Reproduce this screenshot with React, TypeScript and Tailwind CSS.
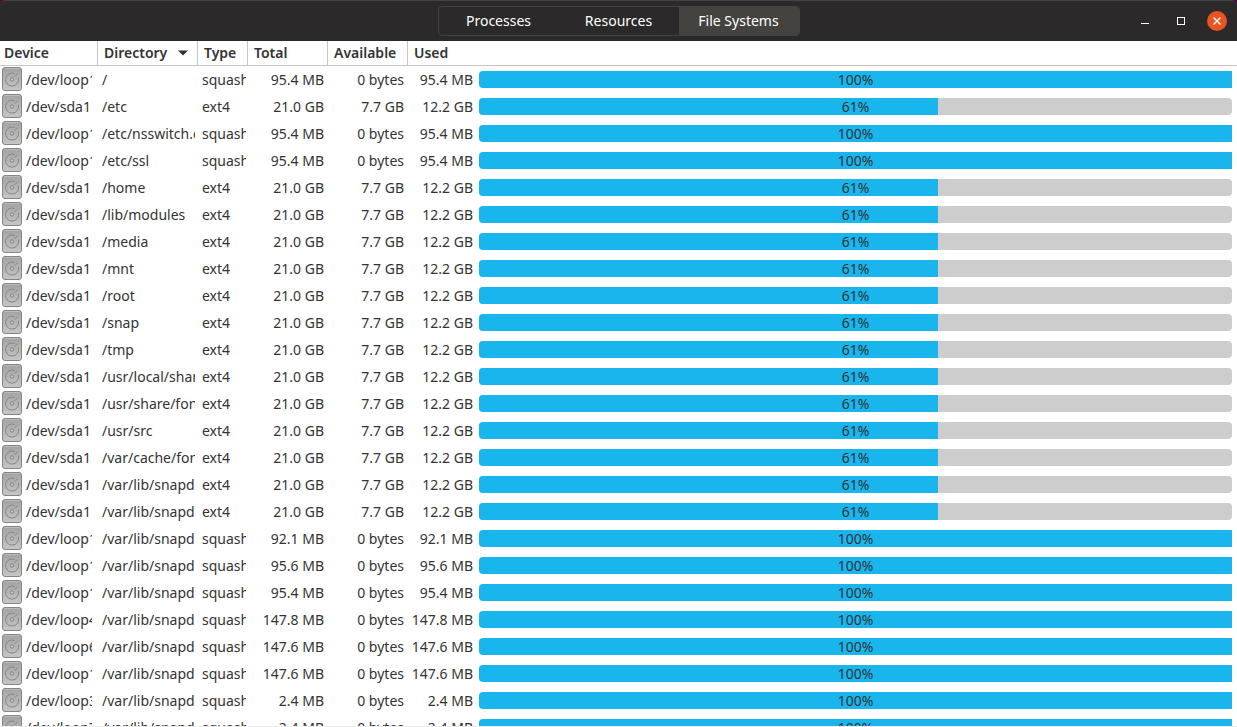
interface FileSystem {
  device: string;
  directory: string;
  type: string;
  total: string;
  available: string;
  used: string;
  percent: number;
}

const snap = (device: string, directory: string, size: string): FileSystem => ({
  device,
  directory,
  type: 'squashfs',
  total: size,
  available: '0 bytes',
  used: size,
  percent: 100,
});

const disk = (directory: string): FileSystem => ({
  device: '/dev/sda1',
  directory,
  type: 'ext4',
  total: '21.0 GB',
  available: '7.7 GB',
  used: '12.2 GB',
  percent: 61,
});

const fileSystems: FileSystem[] = [
  snap('/dev/loop1', '/', '95.4 MB'),
  disk('/etc'),
  snap('/dev/loop1', '/etc/nsswitch.conf', '95.4 MB'),
  snap('/dev/loop1', '/etc/ssl', '95.4 MB'),
  disk('/home'),
  disk('/lib/modules'),
  disk('/media'),
  disk('/mnt'),
  disk('/root'),
  disk('/snap'),
  disk('/tmp'),
  disk('/usr/local/share'),
  disk('/usr/share/fonts'),
  disk('/usr/src'),
  disk('/var/cache/fonts'),
  disk('/var/lib/snapd'),
  disk('/var/lib/snapd'),
  snap('/dev/loop1', '/var/lib/snapd', '92.1 MB'),
  snap('/dev/loop1', '/var/lib/snapd', '95.6 MB'),
  snap('/dev/loop1', '/var/lib/snapd', '95.4 MB'),
  snap('/dev/loop4', '/var/lib/snapd', '147.8 MB'),
  snap('/dev/loop6', '/var/lib/snapd', '147.6 MB'),
  snap('/dev/loop1', '/var/lib/snapd', '147.6 MB'),
  snap('/dev/loop3', '/var/lib/snapd', '2.4 MB'),
  snap('/dev/loop7', '/var/lib/snapd', '2.4 MB'),
];

const tabs = ['Processes', 'Resources', 'File Systems'];

function DriveIcon() {
  return (
    <svg width="20" height="24" viewBox="0 0 20 24" className="mb-px shrink-0" aria-hidden="true">
      <defs>
        <linearGradient id="drive" x1="0" y1="0" x2="0" y2="1">
          <stop offset="0" stopColor="#a2a2a2" />
          <stop offset="1" stopColor="#c6c6c6" />
        </linearGradient>
      </defs>
      <rect x="0.5" y="0.5" width="19" height="23" rx="2.5" fill="url(#drive)" stroke="#858585" />
      <path d="M2.5 1.5h15" stroke="#bcbcbc" />
      <path d="M12.6 6.6A6.5 6.5 0 1 0 16.3 10.8" fill="none" stroke="#858585" />
      <path d="M12.4 10l3.2-3.2" stroke="#858585" />
      <circle cx="10" cy="12.5" r="1.7" fill="#c4c4c4" stroke="#858585" />
    </svg>
  );
}

function TitleBar() {
  return (
    <header className="grid h-[41px] shrink-0 grid-cols-[1fr_auto_1fr] items-center rounded-t-md border-t border-[#454343] bg-[#2b2929]">
      <nav className="col-start-2 flex h-[30px] overflow-hidden rounded border border-[#454340]">
        {tabs.map((tab) => (
          <button
            key={tab}
            className={`w-[120px] pb-px text-center text-white ${tab === 'File Systems' ? 'bg-[#454340]' : ''}`}
          >
            {tab}
          </button>
        ))}
      </nav>
      <div className="flex items-center justify-end gap-4 pr-2.5">
        <button aria-label="Minimize" className="flex size-5 items-center justify-center">
          <svg width="20" height="20" viewBox="0 0 20 20">
            <path d="M6 12.5h8" stroke="#fff" />
          </svg>
        </button>
        <button aria-label="Maximize" className="flex size-5 items-center justify-center">
          <svg width="20" height="20" viewBox="0 0 20 20">
            <rect x="6.5" y="6.5" width="7" height="7" fill="none" stroke="#fff" />
          </svg>
        </button>
        <button aria-label="Close" className="flex size-5 items-center justify-center rounded-full bg-[#e95420]">
          <svg width="20" height="20" viewBox="0 0 20 20">
            <path d="M6.5 6.5l7 7m0-7l-7 7" stroke="#fff" strokeWidth="1.4" />
          </svg>
        </button>
      </div>
    </header>
  );
}

function UsageBar({ percent }: { percent: number }) {
  // the filled part has a square right end, even when it covers the whole trough
  return (
    <div className={`relative h-[17px] overflow-hidden bg-[#cdcdcd] ${percent === 100 ? 'rounded-l' : 'rounded'}`}>
      <div className="h-full bg-[#19b6ee]" style={{ width: `${percent}%` }} />
      <span className="absolute inset-0 text-center leading-[17px]">{percent}%</span>
    </div>
  );
}

export default function App() {
  const head = 'border-r border-b border-[#c6c6c6] pl-1.5 text-left font-semibold';

  return (
    <div className="flex h-screen flex-col overflow-hidden bg-[#4d0a3f] font-['Noto_Sans',sans-serif] text-[14px] leading-5 text-[#333333]">
      <TitleBar />
      <main className="min-h-0 flex-1 overflow-hidden border-b border-[#ececec] bg-white">
        <table className="w-full table-fixed border-separate border-spacing-0 whitespace-nowrap">
          <colgroup>
            <col className="w-[98px]" />
            <col className="w-[100px]" />
            <col className="w-[50px]" />
            <col className="w-[80px]" />
            <col className="w-[80px]" />
            <col className="w-[68px]" />
            <col />
          </colgroup>
          <thead>
            <tr className="h-[25px]">
              <th className="border-r border-b border-[#c6c6c6] pl-1 text-left font-semibold">Device</th>
              <th className={head} aria-sort="ascending">
                <div className="flex items-center justify-between pr-2">
                  Directory
                  <svg width="12" height="6" viewBox="0 0 12 6" aria-hidden="true">
                    <path d="M1 0.5h10l-5 5z" fill="#333" />
                  </svg>
                </div>
              </th>
              <th className={head}>Type</th>
              <th className={head}>Total</th>
              <th className={head}>Available</th>
              <th colSpan={2} className="border-b border-[#c6c6c6] pl-1.5 text-left font-semibold">
                Used
              </th>
            </tr>
          </thead>
          <tbody>
            {fileSystems.map((fs, index) => (
              <tr key={index} className="h-[27px]">
                <td className="pr-1.5 pl-0.5">
                  <div className="flex h-[27px] items-center gap-1 overflow-hidden">
                    <DriveIcon />
                    <span>{fs.device}</span>
                  </div>
                </td>
                <td className="pr-[3px] pl-1">
                  <div className="overflow-hidden">{fs.directory}</div>
                </td>
                <td className="pr-0.5 pl-1">
                  <div className="overflow-hidden">{fs.type}</div>
                </td>
                <td className="pr-1 text-right">{fs.total}</td>
                <td className="pr-1 text-right">{fs.available}</td>
                <td className="pr-[3px] text-right">{fs.used}</td>
                <td className="pr-[5px] pl-[3px]">
                  <UsageBar percent={fs.percent} />
                </td>
              </tr>
            ))}
          </tbody>
        </table>
      </main>
    </div>
  );
}
